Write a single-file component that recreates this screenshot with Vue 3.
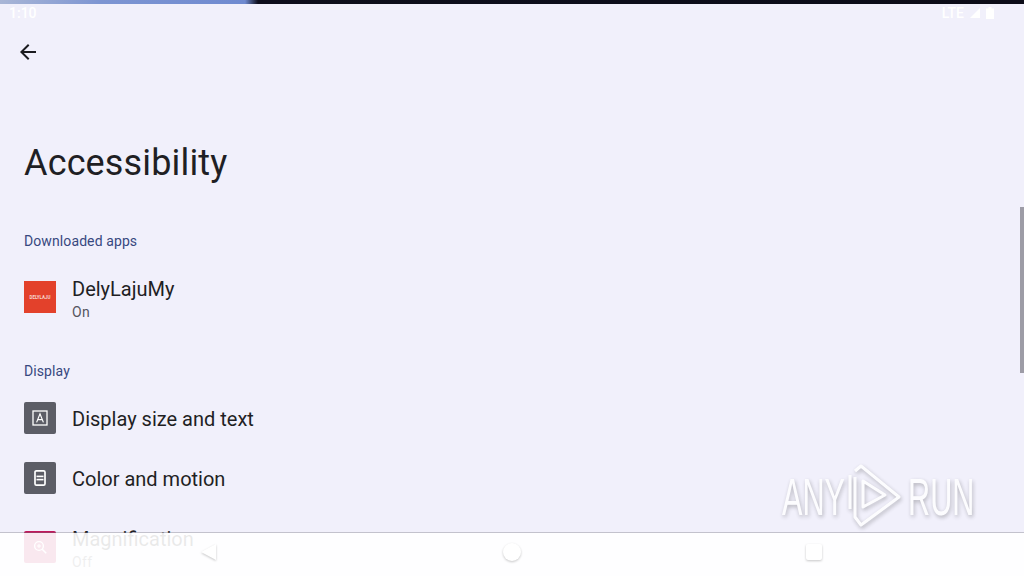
<script setup>
const displayRows = [
  { title: 'Display size and text', icon: 'text' },
  { title: 'Color and motion', icon: 'phone' },
]
</script>

<template>
  <div class="screen">
    <div class="top-strip"></div>

    <main class="page">
      <header class="toolbar">
        <svg class="back" width="24" height="24" viewBox="0 0 24 24">
          <path d="M20 11H7.83l5.59-5.59L12 4l-8 8 8 8 1.41-1.41L7.83 13H20z" fill="#1b1b1f" />
        </svg>
      </header>

      <h1 class="title">Accessibility</h1>

      <h2 class="section first">Downloaded apps</h2>
      <div class="row tall">
        <div class="app-icon"><span class="app-logo">DELYLAJU</span></div>
        <div class="row-text">
          <p class="row-title">DelyLajuMy</p>
          <p class="row-sub">On</p>
        </div>
      </div>

      <h2 class="section">Display</h2>
      <div v-for="row in displayRows" :key="row.title" class="row">
        <div class="tile">
          <svg v-if="row.icon === 'text'" width="18" height="18" viewBox="0 0 18 18">
            <rect x="2" y="2" width="14" height="14" fill="none" stroke="#fff" stroke-width="1.3" />
            <path d="M5.6 13.4 9 4.8l3.4 8.6M6.8 10.6h4.4" fill="none" stroke="#fff" stroke-width="1.2" />
          </svg>
          <svg v-else width="18" height="18" viewBox="0 0 18 18">
            <rect x="4" y="1.8" width="10" height="14.4" rx="1.4" fill="none" stroke="#fff" stroke-width="1.7" />
            <rect x="5.5" y="6.6" width="7" height="1.6" fill="#fff" />
            <rect x="5.5" y="9.8" width="7" height="1.6" fill="#fff" />
          </svg>
        </div>
        <p class="row-title">{{ row.title }}</p>
      </div>
      <div class="row tall">
        <div class="tile pink">
          <svg width="18" height="18" viewBox="0 0 18 18">
            <circle cx="8" cy="8" r="4.4" fill="none" stroke="#fff" stroke-width="1.4" />
            <path d="m11.2 11.2 4 4" stroke="#fff" stroke-width="1.6" />
            <path d="M6 8h4M8 6v4" stroke="#fff" stroke-width="1" />
          </svg>
        </div>
        <div class="row-text">
          <p class="row-title">Magnification</p>
          <p class="row-sub">Off</p>
        </div>
      </div>
    </main>

    <div class="scrollbar"></div>

    <div class="status">
      <span class="clock">1:10</span>
      <div class="status-right">
        <span>LTE</span>
        <svg width="12" height="12" viewBox="0 0 12 12"><path d="M11 1v10H1z" fill="#fff" /></svg>
        <svg width="8" height="12" viewBox="0 0 8 12"><path d="M2.5 0h3v1.4H8V12H0V1.4h2.5z" fill="#fff" /></svg>
      </div>
    </div>

    <nav class="navbar">
      <svg class="nav-icon" width="20" height="20" viewBox="0 0 20 20">
        <path d="M17 2v16L2 10z" fill="#fff" />
      </svg>
      <span class="nav-circle"></span>
      <span class="nav-square"></span>
    </nav>

    <div class="watermark">
      <span>ANY</span>
      <svg width="58" height="66" viewBox="0 0 58 66">
        <g fill="none" stroke="#fff" stroke-width="3" stroke-linejoin="round">
          <path d="M8 14v40l6 8 38-28L14 3 8 8" />
          <path d="M16 18v26l22-12z" />
          <path d="M3 12v34" />
        </g>
      </svg>
      <span>RUN</span>
    </div>
  </div>
</template>

<style>
body {
  background: #f1f0fb;
}
</style>

<style scoped>
.screen {
  position: relative;
  width: 1024px;
  height: 576px;
  overflow: hidden;
  background: #f1f0fb;
  font-family: Roboto, "Liberation Sans", sans-serif;
  color: #1b1b1f;
}

.top-strip {
  height: 4px;
  background: linear-gradient(90deg, #a9b6d6 0, #7d95d2 100px, #6f8ad0 245px, #0e0e1c 258px, #0c0c18 100%);
}

.page {
  padding: 0 24px;
}

.toolbar {
  height: 96px;
  display: flex;
  align-items: center;
}

.back {
  margin-left: -8px;
}

.title {
  margin: 41px 0 0;
  font-size: 36px;
  font-weight: 400;
  line-height: 44px;
  letter-spacing: 0.15px;
  color: #1f1f24;
}

.section {
  margin: 22px 0 8px;
  height: 20px;
  font-size: 14px;
  font-weight: 400;
  line-height: 20px;
  letter-spacing: 0.1px;
  color: #38487f;
}

.section.first {
  margin-top: 46px;
}

.row {
  height: 60px;
  display: flex;
  align-items: center;
  gap: 16px;
}

.row > .tile {
  margin-bottom: 2px;
}

.row.tall > .app-icon,
.row.tall > .tile {
  margin-bottom: 4px;
}

.row.tall {
  height: 80px;
}

.row-text {
  display: flex;
  flex-direction: column;
}

.row-title {
  margin: 0;
  font-size: 20px;
  line-height: 26px;
  color: #1f1f24;
}

.row-sub {
  margin: 0;
  font-size: 14px;
  line-height: 20px;
  letter-spacing: 0.4px;
  color: #55555e;
}

.app-icon {
  width: 32px;
  height: 32px;
  display: flex;
  align-items: center;
  justify-content: center;
  background: #e3412b;
}

.app-logo {
  font-size: 4.5px;
  font-weight: 700;
  color: #f6d5cc;
}

.tile {
  width: 32px;
  height: 32px;
  display: flex;
  align-items: center;
  justify-content: center;
  border-radius: 2px;
  background: #5c5d66;
}

.tile.pink {
  background: #c2185b;
}

.scrollbar {
  position: absolute;
  top: 207px;
  right: 0;
  width: 4px;
  height: 166px;
  background: #9d9ca6;
}

.status {
  position: absolute;
  top: 4px;
  left: 0;
  right: 0;
  height: 18px;
  padding: 0 30px 0 9px;
  display: flex;
  align-items: center;
  justify-content: space-between;
  color: #fff;
  font-size: 14px;
  font-weight: 500;
}

.status-right {
  display: flex;
  align-items: center;
  gap: 5px;
  font-size: 14px;
}

.navbar {
  position: absolute;
  left: 0;
  right: 0;
  bottom: 0;
  height: 43px;
  border-top: 1px solid rgba(110, 108, 120, 0.35);
  background: rgba(255, 255, 255, 0.9);
  background-clip: padding-box;
}

.nav-icon,
.nav-circle,
.nav-square {
  position: absolute;
  filter: drop-shadow(0 1px 1px rgba(0, 0, 0, 0.22));
}

.nav-icon {
  left: 199px;
  top: 9px;
}

.nav-circle {
  left: 503px;
  top: 10px;
  width: 18px;
  height: 18px;
  border-radius: 50%;
  background: #fff;
}

.nav-square {
  left: 806px;
  top: 11px;
  width: 16px;
  height: 16px;
  border-radius: 2px;
  background: #fff;
}

.watermark {
  position: absolute;
  left: 780px;
  top: 463px;
  display: flex;
  align-items: center;
  gap: 0;
  font-family: "Liberation Sans", sans-serif;
  font-size: 51px;
  color: #fff;
  opacity: 0.85;
  filter: drop-shadow(1px 2px 2px rgba(0, 0, 0, 0.3));
}

.watermark span {
  display: inline-block;
  transform: scaleX(0.6);
  margin: 0 -19px -2px;
}
</style>
